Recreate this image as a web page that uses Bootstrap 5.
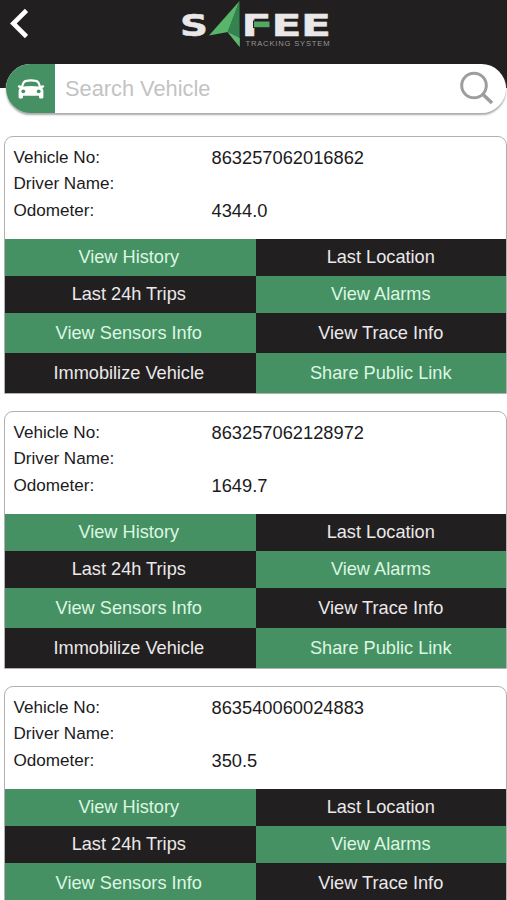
<!DOCTYPE html>
<html lang="en">
<head>
<meta charset="utf-8">
<meta name="viewport" content="width=device-width, initial-scale=1">
<title>Safee Tracking System</title>
<link href="https://cdn.jsdelivr.net/npm/bootstrap@5.3.0/dist/css/bootstrap.min.css" rel="stylesheet">
<style>
  :root { --ink: #221f20; --leaf: #469163; }
  body { font-family: "Liberation Sans", Arial, sans-serif; color: #1b1b1d; height: 900px; }
  .topbar { background: var(--ink); height: 88px; }
  .back { width: 18px; height: 31px; margin: 8px 0 0 10px; }
  .brand { width: 154px; height: 50px; margin-left: 151px; }
  .searchbar { height: 49px; margin: -24px 1px 0 6px; box-shadow: 0 2px 2px #aaa; }
  .search-type { width: 49px; background: var(--leaf); }
  .search-text { font-size: 21.8px; padding: 2px 0 0 10px; }
  .search-text::placeholder { color: #c3c3c3; opacity: 1; }
  .search-go { width: 46px; }
  .vehicles { padding: 23px 0 0 4px; gap: 17px; }
  .vehicle { height: 258px; flex: none; border: 1px solid #b0b0b0; border-radius: 9px 9px 0 0; }
  .facts { height: 102px; padding: 7.5px 0 0 8.5px; }
  .fact { height: 26.7px; line-height: 26.7px; font-size: 17.1px; }
  .fact dt { width: 198px; }
  .fact dd { font-size: 18.3px; }
  .actions { display: grid; grid-template-columns: 250.5px 1fr; grid-template-rows: 37px 37px 40px 40px; }
  .action { font-size: 18.2px; line-height: 1; border-radius: 0; border: 0; background: var(--ink); color: #ebe9ea; }
  .action:nth-child(odd) { padding: 0 3px 0 0; }
  .action.on { background: var(--leaf); color: #dcf7e2; }
</style>
</head>
<body class="bg-white m-0 overflow-hidden">
<header class="topbar d-flex align-items-start">
  <a href="#" class="back d-block lh-1" aria-label="Back">
    <svg class="d-block" width="18" height="31" viewBox="0 0 18 31"><path d="M16.500 2.500L3.300 15.500L16.500 28.500" fill="none" stroke="#fff" stroke-width="4.600"/></svg>
  </a>
  <svg class="brand" viewBox="179 0 154 50" role="img" aria-label="Safee Tracking System">
    <g font-family="DejaVu Sans" font-weight="700" font-size="31" fill="#e9e7e8" stroke="#e9e7e8" stroke-width=".5">
      <text x="180" y="35.500" textLength="28" lengthAdjust="spacingAndGlyphs">S</text>
      <text x="241.500" y="35.500" textLength="30" lengthAdjust="spacingAndGlyphs">F</text>
      <text x="271.500" y="35.500" textLength="30" lengthAdjust="spacingAndGlyphs">E</text>
      <text x="301" y="35.500" textLength="30" lengthAdjust="spacingAndGlyphs">E</text>
    </g>
    <path d="M253 20.500H270V28H253Z" fill="#221f20"/>
    <path d="M254 21.500H269.500V27.200H254Z" fill="#51a963"/>
    <path d="M239.500 1L209 35.500L228 32Z" fill="#59b569"/>
    <path d="M239.500 1L227.500 32L239.700 47Z" fill="#348250"/>
    <path d="M227.500 32L239.700 47V38Z" fill="#60b773"/>
    <text x="245.500" y="46" font-family="Liberation Sans" font-size="7.600" fill="#969495" textLength="84" lengthAdjust="spacing">TRACKING SYSTEM</text>
  </svg>
</header>

<form class="searchbar d-flex rounded-pill overflow-hidden bg-white position-relative">
  <span class="search-type flex-shrink-0 d-flex align-items-center justify-content-center">
    <svg width="28" height="20" viewBox="0 0 28 20" fill="#fff">
      <path d="M4.200 7Q5.300 1.800 8 1Q14-.6 20 1Q22.700 1.800 23.800 7L25 6.200Q27.400 6 27.200 7.600Q26.900 8.900 25.300 9.100Q26.400 10.400 26.400 12.500V18Q26.400 19.500 24.900 19.500H23.400Q22 19.500 22 18V16.800H6V18Q6 19.500 4.600 19.500H3.100Q1.600 19.500 1.600 18V12.500Q1.600 10.400 2.700 9.100Q1.100 8.900.8 7.600Q.6 6 3 6.200Z"/>
      <path d="M6.200 7.500Q7.200 3.700 8.600 3.200Q14 1.900 19.400 3.200Q20.800 3.700 21.800 7.500Q14 6.700 6.200 7.500Z" fill="#469163"/>
      <circle cx="6.300" cy="12.300" r="1.900" fill="#469163"/><circle cx="21.700" cy="12.300" r="1.900" fill="#469163"/>
    </svg>
  </span>
  <input class="search-text form-control border-0 rounded-0 shadow-none bg-white" type="text" placeholder="Search Vehicle" aria-label="Search Vehicle">
  <button class="search-go btn p-0 border-0 flex-shrink-0 d-flex align-items-center" type="button" aria-label="Search">
    <svg width="36" height="36" viewBox="0 0 36 36" fill="none" stroke="#9d9d9d"><circle cx="14" cy="14.500" r="12.300" stroke-width="3"/><path d="M22.500 23L32 32" stroke-width="3.600"/></svg>
  </button>
</form>

<main class="vehicles d-flex flex-column" id="vehicles"></main>

<script src="https://cdn.jsdelivr.net/npm/bootstrap@5.3.0/dist/js/bootstrap.bundle.min.js"></script>
<script>
  const vehicles = [
    ["863257062016862", "4344.0"],
    ["863257062128972", "1649.7"],
    ["863540060024883", "350.5"]
  ];
  const actions = [
    ["View History", 1], ["Last Location", 0], ["Last 24h Trips", 0], ["View Alarms", 1],
    ["View Sensors Info", 1], ["View Trace Info", 0], ["Immobilize Vehicle", 0], ["Share Public Link", 1]
  ];
  const fact = (k, v) => `<div class="fact d-flex"><dt class="fw-normal">${k}</dt><dd class="m-0">${v}</dd></div>`;
  document.getElementById("vehicles").innerHTML = vehicles.map(([no, odo], i) => {
    const shown = i === vehicles.length - 1 ? actions.slice(0, 6) : actions;
    return `
    <section class="vehicle">
      <dl class="facts m-0">${fact("Vehicle No:", no)}${fact("Driver Name:", "")}${fact("Odometer:", odo)}</dl>
      <div class="actions">${shown.map(([t, on]) => `<button type="button" class="action btn py-0${on ? " on" : ""}">${t}</button>`).join("")}</div>
    </section>`;
  }).join("");
</script>
</body>
</html>
